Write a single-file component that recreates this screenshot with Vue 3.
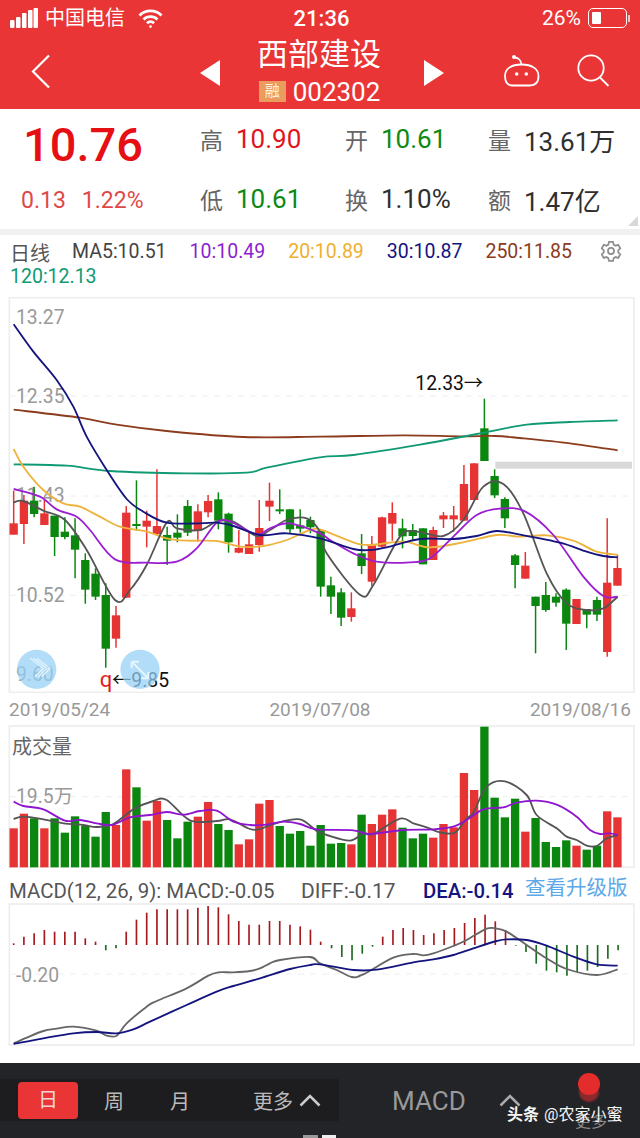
<script setup>
const R = '#e63434', G = '#0b860f'
const cx = i => 41 + i * 30.7
// high, bodyTop, bodyBottom, low, colour flag (1 = red)
const raw = [
[572,670,704,704,1],[585,602,672,732,1],[560,602,642,652,0],[600,640,675,675,1],[647,647,711,768,0],[652,695,711,718,0],
[655,706,749,835,0],[760,780,869,911,0],[805,821,890,900,0],[850,885,1046,1103,0],[918,946,1016,1043,1],[618,638,893,893,1],
[541,672,678,692,0],[632,662,680,742,1],[508,678,702,705,1],[680,705,722,795,0],[643,698,713,727,0],[600,618,698,708,0],
[613,634,692,725,1],[585,603,637,652,1],[577,598,662,688,0],[638,641,727,758,0],[690,744,758,760,1],[697,733,762,762,1],
[600,684,735,755,1],[548,602,620,663,1],[568,628,634,642,0],[628,628,688,700,0],[628,676,686,698,0],[650,660,682,700,0],
[692,692,860,890,0],[830,856,890,942,0],[865,877,953,978,0],[877,925,951,965,1],[702,760,798,822,0],[708,735,845,858,1],
[650,652,740,745,1],[607,639,671,722,1],[656,685,709,745,0],[672,690,708,720,0],[685,685,793,793,0],[680,690,780,780,1],
[636,646,658,684,1],[618,646,658,695,1],[495,552,662,662,1],[490,490,600,600,1],[296,385,483,483,0],[508,528,586,594,0],
[592,597,655,684,0],[762,766,795,865,0],[756,797,836,836,1],[890,890,918,1060,0],[846,885,930,935,0],[880,890,908,920,0],
[865,869,971,1050,0],[897,897,972,972,1],[927,927,944,985,0],[890,900,944,963,0],[655,848,1056,1070,1],[765,804,857,857,1]
]
const candles = raw.map((c, i) => ({ x: cx(i), hi: c[0], top: c[1], h: Math.max(c[2] - c[1], 5), lo: c[3], color: c[4] ? R : G }))

const volTops = [325,281,295,325,295,338,289,318,350,276,315,148,202,302,243,300,355,305,290,246,312,330,373,358,251,240,318,341,333,377,315,371,369,373,284,312,284,268,323,355,341,353,312,322,159,210,20,233,292,236,335,294,366,381,361,377,389,377,274,292]
const vols = volTops.map((t, i) => ({ x: cx(i) - 12.5, y: t, h: 442 - t, color: raw[i][4] ? R : G }))

const macdTops = [205,185,175,165,170,170,170,190,200,226,220,170,134,113,103,103,103,103,98,93,97,118,138,149,149,138,138,149,154,164,200,220,246,256,236,215,185,165,159,165,180,175,165,159,144,129,119,139,165,212,231,266,287,292,302,292,287,276,251,226]
const macd = macdTops.map((t, i) => ({ x: cx(i) + (i > 30 ? 2 : 0), y: t, color: t > 210 ? '#1d6b22' : '#a51a1f' }))

const smooth = p => {
  let d = `M${p[0][0]} ${p[0][1]}`
  for (let i = 0; i < p.length - 1; i++) {
    const a = p[i - 1] || p[i], b = p[i], c = p[i + 1], e = p[i + 2] || c
    d += `C${(b[0] + (c[0] - a[0]) / 6).toFixed(1)} ${(b[1] + (c[1] - a[1]) / 6).toFixed(1)} ${(c[0] - (e[0] - b[0]) / 6).toFixed(1)} ${(c[1] - (e[1] - b[1]) / 6).toFixed(1)} ${c[0]} ${c[1]}`
  }
  return d
}
const pts = (l, r = []) => {
  const o = []
  for (let i = 0; i < l.length; i += 2) o.push([l[i], l[i + 1]])
  for (let i = 0; i < r.length; i += 2) o.push([r[i] + 960, r[i + 1]])
  return smooth(o)
}

const mainLines = [
  { c: '#8c3b1c', d: pts([41,329,240,353,350,374,500,393,730,411,960,410],[250,406,420,409,525,408,600,414,750,430,893,451]) },
  { c: '#0f9a74', d: pts([41,493,200,497,330,513,560,520,740,518,800,503,960,472],[100,465,300,434,470,402,620,374,750,366,893,361]) },
  { c: '#eeb33c', d: pts([41,447,70,500,130,570,190,610,240,620,300,650,360,680,440,695,500,715,560,722,650,723,720,740,790,738,860,720,930,690],[5,690,100,727,150,735,250,725,330,742,430,727,530,705,600,710,680,706,760,722,830,755,893,764]) },
  { c: '#555555', d: pts([41,607,70,603,130,632,195,660,260,750,345,900,390,870,440,795,500,668,530,685,600,690,650,665,700,665,770,708,810,690,860,660,920,655],[0,695,20,760,120,884,160,855,240,710,290,695,370,708,430,660,490,560,550,552,610,640,680,820,740,910,800,930,850,925,893,890]) },
  { c: '#9b1fd0', d: pts([41,567,120,590,170,628,230,650,270,690,345,778,440,788,530,785,590,745,650,668,690,665,770,703,810,685,870,670],[0,700,30,720,100,760,170,785,270,787,330,775,400,710,470,645,540,626,615,634,700,705,790,830,850,888,893,890]) },
  { c: '#14147f', d: pts([41,73,100,155,170,240,220,320,260,410,320,510,380,597,430,635,500,668,600,670,650,668,700,678,780,705,860,700],[0,715,100,747,150,750,200,742,300,717,400,717,470,708,530,693,600,704,720,728,800,755,850,768,893,772]) }
]
const volLines = [
  { c: '#555555', d: pts([41,297,70,290,130,298,190,310,250,315,290,321,340,312,400,268,460,243,500,240,570,301,650,303,690,298,750,327,780,327,830,309,900,298],[-10,333,20,345,90,362,130,340,160,342,240,296,280,310,320,322,360,337,405,338,440,295,460,278,500,200,555,184,620,225,650,285,710,325,740,350,770,360,800,377,830,378,860,355,893,345]) },
  { c: '#8f14d0', d: pts([41,245,70,258,130,268,195,302,240,300,300,312,340,314,390,292,450,285,500,276,550,284,600,273,650,272,700,305,750,315,800,314,850,305,900,312],[-10,328,100,331,150,342,250,330,340,328,400,320,440,300,490,268,550,262,590,248,650,242,710,254,770,290,810,330,840,342,870,340,893,345]) }
]
const macdLines = [
  { c: '#666666', d: pts([41,505,80,488,130,468,170,461,220,455,290,467,320,482,350,482,380,445,440,395,470,378,560,340,625,302,655,292,700,292,750,288,780,280,810,265,840,255,930,246],[0,265,50,285,95,306,130,298,220,248,280,237,310,241,340,235,400,213,440,195,500,161,530,161,560,170,620,210,680,250,740,282,830,300,893,283]) },
  { c: '#14147f', d: pts([41,507,130,490,220,475,290,471,350,475,400,463,450,440,560,390,650,350,700,333,780,310,870,282,930,270],[0,268,100,285,170,284,280,262,340,253,400,240,460,220,530,198,560,193,620,195,680,212,760,245,830,268,893,272]) }
]
const axis = [['13.27', 73], ['12.35', 308], ['11.43', 606], ['10.52', 907], ['9.60', 1143]]
const grids = [288, 588, 886]
</script>

<template>
  <div class="page">
    <header class="head">
      <div class="status">
        <div class="status-left">
          <svg class="signal" width="28" height="20" viewBox="0 0 28 20"><rect x="0" y="12" width="4.5" height="8" rx="1"/><rect x="6" y="9" width="4.5" height="11" rx="1"/><rect x="12" y="5" width="4.5" height="15" rx="1"/><rect x="18" y="2" width="4.5" height="18" rx="1"/><rect x="23.5" y="0" width="4.5" height="20" rx="1"/></svg>
          <span class="carrier">中国电信</span>
          <svg class="wifi" width="25" height="21" viewBox="0 0 25 21" fill="none" stroke="#fff" stroke-width="2.8"><path d="M1.5 7.5a15.5 15.5 0 0 1 22 0"/><path d="M5.5 11.5a10 10 0 0 1 14 0"/><path d="M9 15.2a5 5 0 0 1 7 0"/><circle cx="12.5" cy="18.6" r="1.3" fill="#fff" stroke="none"/></svg>
        </div>
        <span class="time">21:36</span>
        <div class="status-right">
          <span class="pct">26%</span>
          <div class="battery"><i></i></div>
          <b class="nub"></b>
        </div>
      </div>
      <div class="nav">
        <svg class="back" width="20" height="35" viewBox="0 0 20 35" fill="none" stroke="#fff" stroke-width="2.2"><path d="M18 1.5 2 17.5 18 33.5"/></svg>
        <div class="center">
          <svg width="20" height="26" viewBox="0 0 20 26"><path d="M20 0V26L0 13Z" fill="#fff"/></svg>
          <div class="title">
            <div class="name">西部建设</div>
            <div class="code"><span class="badge">融</span><span>002302</span></div>
          </div>
          <svg width="20" height="26" viewBox="0 0 20 26"><path d="M0 0V26L20 13Z" fill="#fff"/></svg>
        </div>
        <div class="tools">
          <svg width="36" height="32" viewBox="0 0 36 32" fill="none" stroke="#fff" stroke-width="1.8"><circle cx="10" cy="2" r="2" fill="#fff" stroke="none"/><path d="M10.500 2.500C14 2.500 17 5 17.500 9.500"/><path d="M1 21C1 14 7 9.500 17.500 9.500S34.500 14 34.500 21C34.500 28 31 30.500 26 30.500H9C4 30.500 1 28 1 21Z"/><circle cx="12.700" cy="19" r="1.800" fill="#fff" stroke="none"/><circle cx="22.300" cy="19" r="1.800" fill="#fff" stroke="none"/></svg>
          <svg width="33" height="34" viewBox="0 0 33 34" fill="none" stroke="#fff" stroke-width="1.800"><circle cx="14" cy="14" r="12.700"/><path d="M23 23.500 31.500 32"/></svg>
        </div>
      </div>
    </header>

    <section class="quote">
      <div class="price-col">
        <div class="price">10.76</div>
        <div class="change"><span>0.13</span><span>1.22%</span></div>
      </div>
      <div class="stat"><span class="lab">高</span><span class="val up">10.90</span></div>
      <div class="stat"><span class="lab">开</span><span class="val down">10.61</span></div>
      <div class="stat"><span class="lab">量</span><span class="val">13.61万</span></div>
      <div class="stat"><span class="lab">低</span><span class="val down">10.61</span></div>
      <div class="stat"><span class="lab">换</span><span class="val">1.10%</span></div>
      <div class="stat"><span class="lab">额</span><span class="val">1.47亿</span></div>
      <svg class="corner" width="10" height="10" viewBox="0 0 10 10"><path d="M10 0V10H0Z" fill="#d8d8d8"/></svg>
    </section>
    <div class="strip"></div>

    <section class="legend">
      <div class="leg-row">
        <span class="period">日线</span>
        <span class="ma c5">MA5:10.51</span>
        <span class="ma c10">10:10.49</span>
        <span class="ma c20">20:10.89</span>
        <span class="ma c30">30:10.87</span>
        <span class="ma c250">250:11.85</span>
        <svg class="gear" width="22" height="22" viewBox="0 0 24 24" fill="none" stroke="#8f8f8f" stroke-width="1.900"><path d="M9.800 2.500h4.400l.7 3 2.100 1.200 2.900-.9 2.200 3.800-2.200 2.100v2.400l2.200 2.100-2.200 3.800-2.900-.9-2.100 1.200-.7 3H9.800l-.7-3-2.100-1.200-2.900.9-2.200-3.800 2.200-2.100v-2.400l-2.200-2.100 2.200-3.800 2.900.9 2.100-1.200Z" transform="translate(0 -.5)"/><circle cx="12" cy="12" r="3.300"/></svg>
      </div>
      <div class="ma c120">120:12.13</div>
    </section>

    <svg class="chart main" viewBox="0 -9 1920 1188">
      <rect x="28" y="-7" width="1874" height="1184" fill="#fff" stroke="#eee" stroke-width="5"/>
      <line v-for="g in grids" :key="g" x1="30" x2="1900" :y1="g" :y2="g" stroke="#eee" stroke-width="3" stroke-dasharray="18 18"/>
      <text v-for="a in axis" :key="a[0]" x="48" :y="a[1]" class="axis">{{ a[0] }}</text>
      <g v-for="(c, i) in candles" :key="i">
        <line :x1="c.x" :x2="c.x" :y1="c.hi" :y2="c.lo" :stroke="c.color" stroke-width="4.500"/>
        <rect :x="c.x - 12.5" :y="c.top" width="25" :height="c.h" :fill="c.color"/>
      </g>
      <path v-for="l in mainLines" :key="l.c" :d="l.d" :stroke="l.c" fill="none" stroke-width="5.500"/>
      <rect x="1486" y="485" width="410" height="21" fill="#d9d9d9"/>
      <text x="1246" y="270" class="hint">12.33→</text>
      <text x="299" y="1161" class="q">q</text>
      <text x="336" y="1161" class="hint">←9.85</text>
      <circle cx="110" cy="1108" r="59" fill="#94d0f7" opacity=".72"/>
      <circle cx="420" cy="1108" r="59" fill="#94d0f7" opacity=".72"/>
      <path d="M90 1075 130 1105 105 1130M100 1075 140 1105 115 1130M110 1075 150 1105 125 1130" stroke="#e2f3fd" stroke-width="4" fill="none"/>
      <path d="M395 1085 445 1135M395 1085h22M395 1085v20M445 1135h-22M445 1135v-20" stroke="#e6f5fe" stroke-width="6" fill="none"/>
    </svg>

    <div class="dates"><span>2019/05/24</span><span>2019/07/08</span><span>2019/08/16</span></div>

    <svg class="chart vol" viewBox="0 15 1920 429">
      <rect x="28" y="18" width="1874" height="424" fill="#fff" stroke="#eee" stroke-width="5"/>
      <line x1="30" x2="1900" y1="230" y2="230" stroke="#eee" stroke-width="3" stroke-dasharray="18 18"/>
      <text x="36" y="103" class="vtitle">成交量</text>
      <text x="48" y="250" class="axis">19.5万</text>
      <rect v-for="(b, i) in vols" :key="i" :x="b.x" :y="b.y" width="25" :height="b.h" :fill="b.color"/>
      <path v-for="l in volLines" :key="l.c" :d="l.d" :stroke="l.c" fill="none" stroke-width="5.500"/>
    </svg>

    <div class="macd-head">
      <span class="m1">MACD(12, 26, 9): MACD:-0.05</span>
      <span class="m2">DIFF:-0.17</span>
      <span class="m3">DEA:-0.14</span>
      <span class="m4">查看升级版</span>
    </div>

    <svg class="chart macd" viewBox="0 84 1920 429">
      <rect x="28" y="87" width="1874" height="423" fill="#fff" stroke="#eee" stroke-width="5"/>
      <line x1="30" x2="1900" y1="297" y2="297" stroke="#eee" stroke-width="3" stroke-dasharray="18 18"/>
      <text x="48" y="320" class="axis">-0.20</text>
      <line v-for="(b, i) in macd" :key="i" :x1="b.x" :x2="b.x" y1="210" :y2="b.y" :stroke="b.color" stroke-width="5"/>
      <path v-for="l in macdLines" :key="l.c" :d="l.d" :stroke="l.c" fill="none" stroke-width="5.500"/>
    </svg>

    <div class="gap"></div>

    <footer class="bar">
      <div class="periods">
        <span class="on">日</span>
        <span class="p">周</span>
        <span class="p">月</span>
        <span class="more">更多<svg width="22" height="14" viewBox="0 0 22 14" fill="none" stroke="#ccc" stroke-width="2.500"><path d="M1.500 12.500 11 3l9.500 9.500"/></svg></span>
      </div>
      <span class="macd-tab">MACD</span>
      <svg class="caret" width="22" height="14" viewBox="0 0 22 14" fill="none" stroke="#aaa" stroke-width="2.500"><path d="M1.500 12.500 11 3l9.500 9.500"/></svg>
      <div class="dot"></div>
      <span class="ghost">更多</span>
      <span class="mark"><b>头条</b>@农家小蜜</span>
      <i class="tick t1"></i><i class="tick t2"></i>
    </footer>
  </div>
</template>

<style>
html, body { margin: 0; background: #fff; }
</style>

<style scoped>
.page { width: 640px; height: 1138px; overflow: hidden; background: #fff; font-family: Roboto, "Noto Sans CJK SC", sans-serif; color: #333; }
.head { background: #e93535; height: 109px; color: #fff; }
.status { height: 36px; display: grid; grid-template-columns: 1fr auto 1fr; align-items: center; padding: 0 10px; }
.status-left { display: flex; align-items: center; }
.signal { fill: #fff; }
.carrier { font-size: 20px; margin: 0 13px 0 7px; line-height: 36px; }
.time { font-size: 22px; font-weight: 500; margin-left: 3px; }
.status-right { display: flex; align-items: center; justify-content: flex-end; }
.pct { font-size: 21px; margin-right: 7px; }
.battery { width: 39px; height: 20px; border: 1px solid #fff; border-radius: 5px; padding: 3px; box-sizing: border-box; }
.battery i { display: block; width: 9px; height: 100%; background: #fff; border-radius: 1px; }
.nub { width: 2px; height: 7px; background: #fff; opacity: .7; margin-left: 1px; }
.nav { height: 73px; display: grid; grid-template-columns: 1fr auto 1fr; align-items: center; padding: 0 30px 0 31px; }
.back { margin-top: -3px; }
.center { display: flex; align-items: center; gap: 38px; margin-left: 3px; }
.title { width: 125px; margin-right: 3px; display: flex; flex-direction: column; align-items: center; }
.name { font-size: 31px; line-height: 38px; white-space: nowrap; margin: -2px 3px 2px 0; }
.code { display: flex; align-items: center; gap: 7px; font-size: 26px; line-height: 32px; white-space: nowrap; margin-right: 2px; }
.badge { width: 27px; height: 21px; background: #ea9b5e; color: #fff1df; font-size: 15px; line-height: 21px; text-align: center; }
.tools { display: flex; justify-content: flex-end; align-items: center; gap: 37px; margin-top: -4px; }
.quote { position: relative; height: 120px; display: grid; grid-template-columns: 200px 145px 143px 1fr; grid-template-rows: 60px 60px; align-items: center; }
.price-col { grid-row: 1 / 3; padding-left: 23px; align-self: stretch; display: flex; flex-direction: column; }
.price { font-size: 47px; line-height: 56px; margin-top: 8px; color: #e60f14; font-weight: 500; }
.change { display: flex; gap: 16px; font-size: 23px; line-height: 28px; margin-top: 14px; margin-left: -2px; color: #e04848; }
.stat { display: flex; align-items: center; gap: 12px; }
.lab { font-size: 23px; width: 24px; color: #666; }
.val { font-size: 26px; color: #2f2f2f; white-space: nowrap; }
.up { color: #e0141c; }
.down { color: #0d8a14; }
.corner { position: absolute; right: 2px; bottom: 3px; }
.strip { height: 6px; background: #f1f1f1; }
.legend { height: 62px; box-sizing: border-box; padding: 4px 0 0 10px; }
.leg-row { display: flex; align-items: center; height: 26px; }
.period { font-size: 20px; color: #555; width: 62px; }
.ma { font-size: 19.500px; line-height: 24px; white-space: nowrap; margin-right: 23px; }
.c5 { color: #444; }
.c10 { color: #8c1fd0; }
.c20 { color: #eeb02f; }
.c30 { color: #14147f; }
.c250 { color: #8c3b1c; margin-right: 28px; }
.c120 { color: #0f9a74; }
.gear { margin-top: -2px; }
.chart { display: block; width: 640px; }
.main { height: 396px; }
.axis { font-size: 58px; fill: #999; }
.hint { font-size: 58px; fill: #111; }
.q { font-size: 66px; fill: #e01b1b; }
.dates { height: 32px; display: flex; justify-content: space-between; padding: 0 9px; align-items: center; font-size: 19px; color: #999; }
.vol { height: 143px; }
.vtitle { font-size: 60px; fill: #666; }
.macd-head { height: 35px; box-sizing: border-box; padding: 10px 0 0 9px; display: flex; align-items: center; white-space: nowrap; color: #555; }
.m1 { width: 292px; font-size: 20.4px; }
.m2 { width: 122px; font-size: 21px; }
.m3 { width: 102px; font-size: 20.300px; color: #14147f; font-weight: 500; }
.m4 { font-size: 20.5px; color: #5da8e8; margin-top: -9px; }
.macd { height: 143px; }
.gap { height: 17px; }
.bar { position: relative; height: 75px; background: #232428; display: flex; align-items: center; }
.periods { width: 339px; height: 42px; margin-top: -1px; background: #1d1d20; display: flex; align-items: center; box-sizing: border-box; padding-left: 18px; color: #bbb; font-size: 20px; }
.on { width: 60px; height: 37px; line-height: 37px; text-align: center; background: #e93535; color: #f3d4d4; border-radius: 4px; margin-right: 3px; }
.p { width: 66px; text-align: center; }
.more { display: flex; align-items: center; gap: 6px; margin-left: 40px; }
.macd-tab { margin-left: 53px; font-size: 26px; color: #999; line-height: 76px; }
.caret { margin-left: 33px; margin-top: -2px; }
.dot { position: absolute; left: 578px; top: 10px; width: 22px; height: 22px; border-radius: 50%; background: #e52c2c; box-shadow: 0 8px 2px -1px #8c2a2c; }
.ghost { position: absolute; left: 575px; top: 50px; font-size: 16px; line-height: 18px; color: #8c8c8c; }
.mark { position: absolute; left: 507px; top: 42px; font-size: 16px; line-height: 20px; color: #f5f5f5; white-space: nowrap; }
.mark b { font-weight: 700; margin-right: 5px; }
.tick { position: absolute; bottom: 0; height: 3px; }
.t1 { left: 303px; width: 15px; background: #999; }
.t2 { left: 322px; width: 14px; background: #eee; }
</style>
